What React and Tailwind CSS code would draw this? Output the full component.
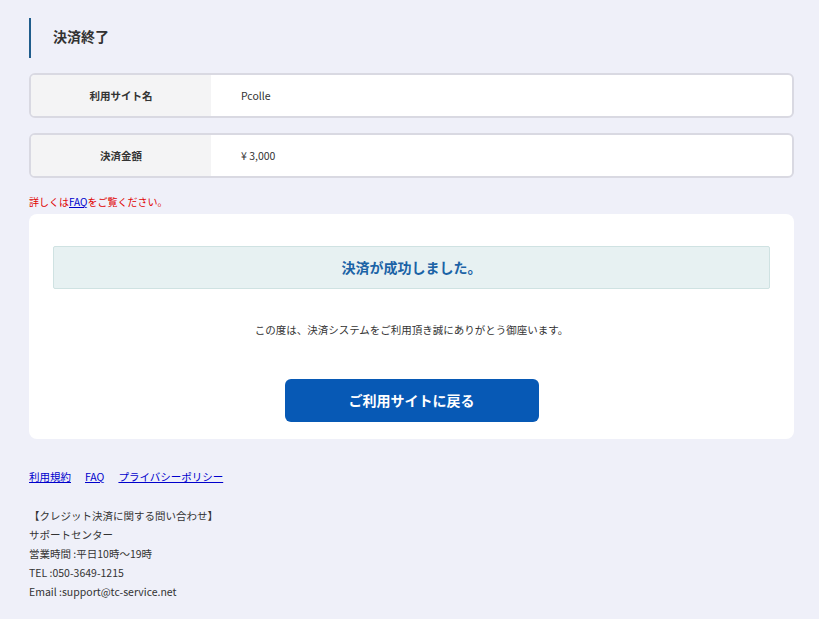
const FONT = { fontFamily: '"Noto Sans CJK JP", "Noto Sans", sans-serif' }

function InfoRow({ label, value }) {
  return (
    <div className="flex h-[45px] overflow-hidden rounded-[6px] border-2 border-[#d9d9e2] bg-white">
      <div className="flex w-[180px] items-center justify-center bg-[#f4f4f5] text-[10.5px] font-bold text-[#333]">
        {label}
      </div>
      <div className="flex items-center pl-[30px] text-[10.5px] text-[#333]">{value}</div>
    </div>
  )
}

export default function App() {
  return (
    <div className="min-h-[619px] bg-[#eff0f9] pl-[29px] pr-[25px] pt-[18px] pb-4 text-[#333]" style={FONT}>
      <div className="flex h-[40px] items-center border-l-2 border-[#1f5d8c] pb-[3px] pl-[22px]">
        <h1 className="text-[14px] font-bold text-[#333]">決済終了</h1>
      </div>

      <div className="mt-[15px] space-y-[15px]">
        <InfoRow label="利用サイト名" value="Pcolle" />
        <InfoRow label="決済金額" value="¥ 3,000" />
      </div>

      <p className="mt-[17px] text-[10px] leading-[14px] text-[#e00000]">
        詳しくは<a href="#" className="text-[#0000cc] underline">FAQ</a>をご覧ください。
      </p>

      <div className="mt-[5px] rounded-[8px] bg-white px-[24px] pt-[32px] pb-[17px]">
        <div className="flex h-[43px] items-center justify-center rounded-[2px] border border-[#cfe2e2] bg-[#e7f1f2]">
          <span className="text-[14px] font-bold text-[#1b63a6]">決済が成功しました。</span>
        </div>
        <p className="mt-[33px] text-center text-[10.5px] leading-[16px] text-[#333]">
          この度は、決済システムをご利用頂き誠にありがとう御座います。
        </p>
        <div className="mt-[41px] flex justify-center">
          <button className="h-[43px] w-[254px] rounded-[6px] bg-[#0759b5] text-[14px] font-bold text-white">
            ご利用サイトに戻る
          </button>
        </div>
      </div>

      <div className="mt-[30px] flex gap-[14px] text-[10.5px] leading-[16px]">
        <a href="#" className="text-[#0000cc] underline">利用規約</a>
        <a href="#" className="text-[#0000cc] underline">FAQ</a>
        <a href="#" className="text-[#0000cc] underline">プライバシーポリシー</a>
      </div>

      <div className="mt-[21px] text-[10.5px] leading-[19px] text-[#333]">
        <p>【クレジット決済に関する問い合わせ】</p>
        <p>サポートセンター</p>
        <p>営業時間 :平日10時～19時</p>
        <p>TEL :050-3649-1215</p>
        <p>Email :support@tc-service.net</p>
      </div>
    </div>
  )
}
